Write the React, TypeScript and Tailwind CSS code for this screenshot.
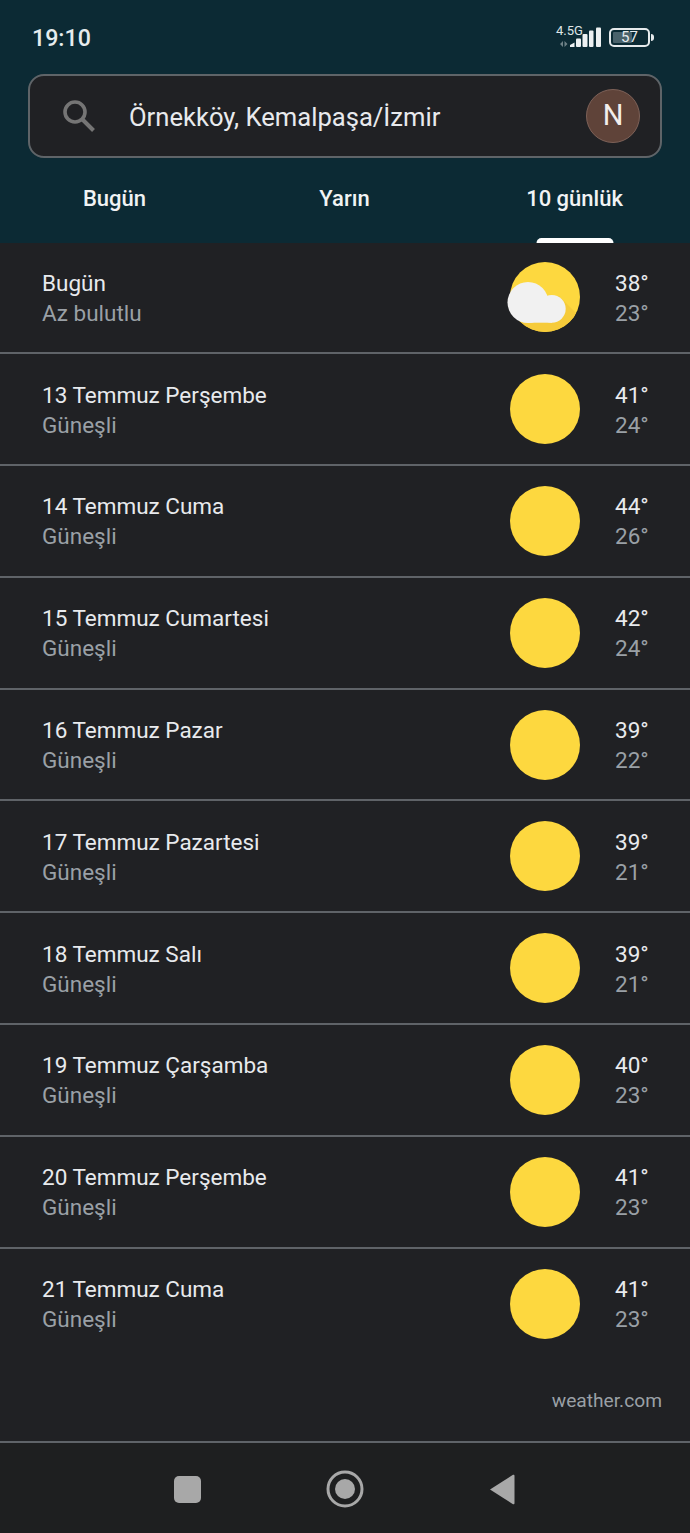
import React from 'react';

const days = [
  { title: 'Bugün', sub: 'Az bulutlu', high: 38, low: 23, cloud: true },
  { title: '13 Temmuz Perşembe', sub: 'Güneşli', high: 41, low: 24 },
  { title: '14 Temmuz Cuma', sub: 'Güneşli', high: 44, low: 26 },
  { title: '15 Temmuz Cumartesi', sub: 'Güneşli', high: 42, low: 24 },
  { title: '16 Temmuz Pazar', sub: 'Güneşli', high: 39, low: 22 },
  { title: '17 Temmuz Pazartesi', sub: 'Güneşli', high: 39, low: 21 },
  { title: '18 Temmuz Salı', sub: 'Güneşli', high: 39, low: 21 },
  { title: '19 Temmuz Çarşamba', sub: 'Güneşli', high: 40, low: 23 },
  { title: '20 Temmuz Perşembe', sub: 'Güneşli', high: 41, low: 23 },
  { title: '21 Temmuz Cuma', sub: 'Güneşli', high: 41, low: 23 },
];

const SunIcon = ({ cloud }: { cloud?: boolean }) => (
  <svg width="76" height="72" viewBox="0 0 76 72" className="shrink-0">
    <defs>
      <clipPath id="sun-clip">
        <circle cx="40" cy="36" r="35" />
      </clipPath>
    </defs>
    <circle cx="40" cy="36" r="35" fill="#fdd83f" />
    {cloud && (
      <>
        {/* long shadow under the cloud */}
        <path d="M54 35 L86 67 V80 H32 L8 56 Z" fill="#f6cb3a" clipPath="url(#sun-clip)" />
        <g fill="#f1f1f1">
          <circle cx="23" cy="41.5" r="20.5" />
          <circle cx="46.8" cy="47.8" r="13.9" />
          <rect x="23" y="40" width="24" height="21.7" />
        </g>
      </>
    )}
  </svg>
);

const SignalIcon = () => (
  <svg width="47" height="32" viewBox="0 0 47 32">
    <text x="1" y="14" fontSize="13" fill="#dfe5e7" fontFamily="Roboto, sans-serif">4.5G</text>
    <path d="M5 23 L8 20 V26 Z M9.5 20 V26 L12.5 23 Z" fill="#6f8187" />
    <path d="M15 24 L19.5 21.5 V26 H15 Z" fill="#eef1f2" />
    <rect x="21" y="17.5" width="5" height="8.5" rx="1" fill="#eef1f2" />
    <rect x="27.5" y="13" width="5" height="13" rx="1" fill="#eef1f2" />
    <rect x="34" y="9.5" width="4.5" height="16.5" rx="1" fill="#eef1f2" />
    <rect x="41" y="6.5" width="5" height="19.5" rx="1" fill="#eef1f2" />
  </svg>
);

const BatteryIcon = () => (
  <div className="flex items-center gap-[1px]">
    <div className="relative flex h-[19px] w-[41px] items-center rounded-[5px] border-2 border-[#e6eaec] p-[2px]">
      <div className="h-full w-[57%] rounded-[1px] bg-[#4a626b]" />
      <span className="absolute inset-0 flex items-center justify-center text-[15px] leading-none text-[#e6eaec]">57</span>
    </div>
    <div className="h-[7px] w-[3px] rounded-r-sm bg-[#e6eaec]" />
  </div>
);

export default function App() {
  return (
    <div className="flex h-[1533px] w-[690px] flex-col overflow-hidden bg-[#202124] font-['Roboto',sans-serif] text-white">
      {/* Header */}
      <div className="flex h-[242.5px] shrink-0 flex-col bg-[#0c2a34]">
        <div className="flex h-[74px] items-center justify-between pl-[32px] pr-[36px]">
          <span className="pt-[2px] text-[23.2px] font-medium text-[#e6ecee]">19:10</span>
          <div className="flex items-center gap-[7px]">
            <SignalIcon />
            <BatteryIcon />
          </div>
        </div>

        <div className="mx-[28px] flex h-[84px] items-center rounded-[16px] border-2 border-[#5f6468] bg-[#202124] pl-[32px] pr-[20px]">
          <svg width="34" height="34" viewBox="0 0 34 34" fill="none" stroke="#757575" className="shrink-0">
            <circle cx="13" cy="13" r="10" strokeWidth="3.6" />
            <path d="M20.5 20.5 L31.5 31.5" strokeWidth="4" />
          </svg>
          <span className="ml-[33px] flex-1 pt-[3px] text-[25.6px] text-[#e8eaed]">Örnekköy, Kemalpaşa/İzmir</span>
          <div className="flex h-[54px] w-[54px] items-center justify-center rounded-full border border-[#7d6158] bg-[#5f4339] text-[29px] text-[#f3eeec]">
            N
          </div>
        </div>

        <div className="grid flex-1 grid-cols-3">
          {['Bugün', 'Yarın', '10 günlük'].map((tab, i) => (
            <div key={tab} className="relative flex items-center justify-center pb-[3px] pr-[1px] text-[22px] font-medium text-[#f1f3f4]">
              {tab}
              {i === 2 && (
                <div className="absolute bottom-0 left-1/2 h-[5px] w-[77px] -translate-x-1/2 rounded-t-[5px] bg-white" />
              )}
            </div>
          ))}
        </div>
      </div>

      {/* Days */}
      <div className="flex flex-col">
        {days.map((d) => (
          <div
            key={d.title}
            className="flex h-[111.8px] items-center border-b-2 border-[#5f6368] pl-[42px] pr-[41px] last:border-transparent"
          >
            <div className="flex-1 pt-[1px]">
              <div className="text-[22.5px] leading-[30px] text-[#e8eaed]">{d.title}</div>
              <div className="text-[22.5px] leading-[30px] text-[#9aa0a6]">{d.sub}</div>
            </div>
            <SunIcon cloud={d.cloud} />
            <div className="ml-[34px] w-[34px] pt-[1px]">
              <div className="text-[22.5px] leading-[30px] text-[#e8eaed]">{d.high}°</div>
              <div className="text-[22.5px] leading-[30px] text-[#9aa0a6]">{d.low}°</div>
            </div>
          </div>
        ))}
      </div>

      {/* Attribution */}
      <div className="flex flex-1 items-end justify-end border-b-2 border-[#5f6368] pb-[27px] pr-[28px] text-[19.2px] leading-[26px] text-[#9aa0a6]">
        weather.com
      </div>

      {/* Nav bar */}
      <div className="flex h-[90px] shrink-0 items-center justify-center gap-[125px] bg-[#1e1f20] pr-[2px] pt-[2px]">
        <div className="h-[27px] w-[27px] rounded-[5px] bg-[#a8a8a8]" />
        <svg width="38" height="38" viewBox="0 0 38 38">
          <circle cx="19" cy="19" r="17" fill="none" stroke="#a8a8a8" strokeWidth="3" />
          <circle cx="19" cy="19" r="10" fill="#a8a8a8" />
        </svg>
        <svg width="26" height="31" viewBox="0 0 26 31">
          <path d="M1 15.5 L24 0.8 Q25.5 0.2 25.5 2 V29 Q25.5 30.8 24 30.2 Z" fill="#a8a8a8" />
        </svg>
      </div>
    </div>
  );
}
